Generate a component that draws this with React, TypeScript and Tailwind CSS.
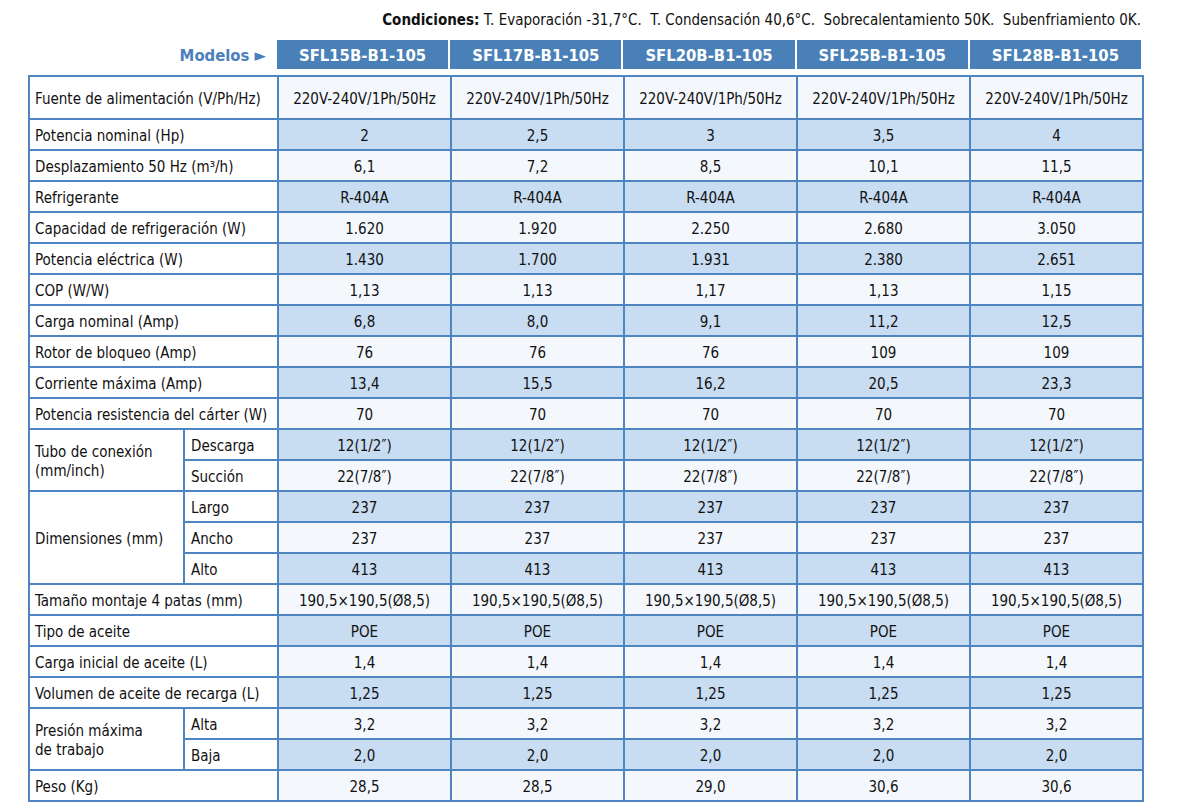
const models = ['SFL15B-B1-105', 'SFL17B-B1-105', 'SFL20B-B1-105', 'SFL25B-B1-105', 'SFL28B-B1-105'];

type Row = {
  label?: string;
  group?: string[];
  span?: number;
  sub?: string;
  values: string[];
  tall?: boolean;
};

const same = (v: string) => [v, v, v, v, v];

const rows: Row[] = [
  { label: 'Fuente de alimentación (V/Ph/Hz)', values: same('220V-240V/1Ph/50Hz'), tall: true },
  { label: 'Potencia nominal (Hp)', values: ['2', '2,5', '3', '3,5', '4'] },
  { label: 'Desplazamiento 50 Hz (m³/h)', values: ['6,1', '7,2', '8,5', '10,1', '11,5'] },
  { label: 'Refrigerante', values: same('R-404A') },
  { label: 'Capacidad de refrigeración (W)', values: ['1.620', '1.920', '2.250', '2.680', '3.050'] },
  { label: 'Potencia eléctrica (W)', values: ['1.430', '1.700', '1.931', '2.380', '2.651'] },
  { label: 'COP (W/W)', values: ['1,13', '1,13', '1,17', '1,13', '1,15'] },
  { label: 'Carga nominal (Amp)', values: ['6,8', '8,0', '9,1', '11,2', '12,5'] },
  { label: 'Rotor de bloqueo (Amp)', values: ['76', '76', '76', '109', '109'] },
  { label: 'Corriente máxima (Amp)', values: ['13,4', '15,5', '16,2', '20,5', '23,3'] },
  { label: 'Potencia resistencia del cárter (W)', values: same('70') },
  { group: ['Tubo de conexión', '(mm/inch)'], span: 2, sub: 'Descarga', values: same('12(1/2″)') },
  { sub: 'Succión', values: same('22(7/8″)') },
  { group: ['Dimensiones (mm)'], span: 3, sub: 'Largo', values: same('237') },
  { sub: 'Ancho', values: same('237') },
  { sub: 'Alto', values: same('413') },
  { label: 'Tamaño montaje 4 patas (mm)', values: same('190,5×190,5(Ø8,5)') },
  { label: 'Tipo de aceite', values: same('POE') },
  { label: 'Carga inicial de aceite (L)', values: same('1,4') },
  { label: 'Volumen de aceite de recarga (L)', values: same('1,25') },
  { group: ['Presión máxima', 'de trabajo'], span: 2, sub: 'Alta', values: same('3,2') },
  { sub: 'Baja', values: same('2,0') },
  { label: 'Peso (Kg)', values: ['28,5', '28,5', '29,0', '30,6', '30,6'] },
];

const cell = 'border-2 border-[#4f86c1] px-[5px] pt-[3px] pb-0 text-left align-middle whitespace-nowrap';

export default function App() {
  return (
    <div className="min-h-screen bg-white text-[15px] text-[#111] font-['DejaVu_Sans_Condensed','DejaVu_Sans',sans-serif]">
      <div className="ml-[28px] w-[1113px] pt-[10px]">
        <p className="text-right leading-[20px] whitespace-nowrap">
          <span className="font-bold">Condiciones:</span> T. Evaporación -31,7°C.&nbsp; T. Condensación 40,6°C.&nbsp; Sobrecalentamiento 50K.&nbsp; Subenfriamiento 0K.
        </p>
        <div className="mt-[10px] flex h-[29px]">
          <div className="flex w-[249px] items-center justify-end pr-[11px] pt-[3px] text-[16.5px] font-bold text-[#4a80bb]">
            Modelos ►
          </div>
          {models.map((m, i) => (
            <div
              key={m}
              className={
                'flex flex-1 items-center justify-center bg-[#4a80b8] pt-[3px] text-[16.5px] font-bold text-white ' +
                (i > 0 ? 'border-l-2 border-white' : '')
              }
            >
              {m}
            </div>
          ))}
        </div>
        <table className="mt-[6px] w-[1113px] table-fixed border-collapse">
          <colgroup>
            <col className="w-[155px]" />
            <col className="w-[94px]" />
            <col className="w-[173px]" />
            <col className="w-[173px]" />
            <col className="w-[173px]" />
            <col className="w-[173px]" />
            <col className="w-[173px]" />
          </colgroup>
          <tbody>
            {rows.map((r, i) => (
              <tr key={i} className={r.tall ? 'h-[43px]' : 'h-[31px]'}>
                {r.label && (
                  <td colSpan={2} className={cell + ' bg-white'}>
                    {r.label}
                  </td>
                )}
                {r.group && (
                  <td rowSpan={r.span} className={cell + ' bg-white leading-[19px]'}>
                    {r.group.map((g) => (
                      <div key={g}>{g}</div>
                    ))}
                  </td>
                )}
                {r.sub && <td className={cell + ' bg-white pl-[6px]'}>{r.sub}</td>}
                {r.values.map((v, j) => (
                  <td
                    key={j}
                    className={
                      'border-2 border-[#4f86c1] pt-[3px] pb-0 text-center align-middle whitespace-nowrap ' +
                      (i % 2 === 1 ? 'bg-[#c8dcf2]' : 'bg-[#f4f8fd]')
                    }
                  >
                    {v}
                  </td>
                ))}
              </tr>
            ))}
          </tbody>
        </table>
      </div>
    </div>
  );
}
